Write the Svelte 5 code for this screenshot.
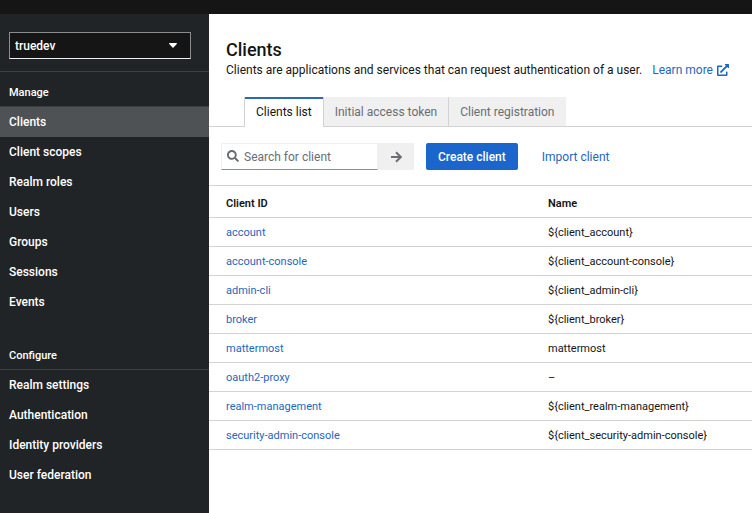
<script lang="ts">
	const manage = ['Clients', 'Client scopes', 'Realm roles', 'Users', 'Groups', 'Sessions', 'Events'];
	const configure = ['Realm settings', 'Authentication', 'Identity providers', 'User federation'];
	const tabs = ['Clients list', 'Initial access token', 'Client registration'];

	const clients = [
		{ id: 'account', name: '${client_account}' },
		{ id: 'account-console', name: '${client_account-console}' },
		{ id: 'admin-cli', name: '${client_admin-cli}' },
		{ id: 'broker', name: '${client_broker}' },
		{ id: 'mattermost', name: 'mattermost' },
		{ id: 'oauth2-proxy', name: '' },
		{ id: 'realm-management', name: '${client_realm-management}' },
		{ id: 'security-admin-console', name: '${client_security-admin-console}' }
	];

	let page = $state('Clients');
	let tab = $state('Clients list');
	let search = $state('');
	let query = $state('');

	const shown = $derived(clients.filter((c) => c.id.includes(query)));

	const submit = (e: Event) => {
		e.preventDefault();
		query = search;
	};
</script>

{#snippet section(title: string, items: string[])}
	<section>
		<h2>{title}</h2>
		<ul>
			{#each items as item}
				<li>
					<a href="#/{item}" class:current={page === item} onclick={() => (page = item)}>{item}</a>
				</li>
			{/each}
		</ul>
	</section>
{/snippet}

<div class="page">
	<header class="masthead"></header>
	<div class="body">
		<nav class="sidebar">
			<div class="realm">
				<select aria-label="Realm">
					<option>truedev</option>
				</select>
				<svg class="caret" viewBox="0 0 8 5" width="8" height="5">
					<path d="M.6 0h6.800c.5 0 .7.6.4.9L4.500 4.400c-.3.3-.7.3-1 0L.2.9C-.1.6.1 0 .6 0z" fill="#fff" />
				</svg>
			</div>
			{@render section('Manage', manage)}
			{@render section('Configure', configure)}
		</nav>

		<main>
			<div class="intro">
				<h1>Clients</h1>
				<p>
					<span>Clients are applications and services that can request authentication of a user.</span>
					<a href="#/docs" class="learn">
						Learn more
						<svg viewBox="0 0 512 512" width="12" height="12" fill="currentColor">
							<path
								d="M432 320h-32a16 16 0 0 0-16 16v112H64V128h144a16 16 0 0 0 16-16V80a16 16 0 0 0-16-16H48a48 48 0 0 0-48 48v352a48 48 0 0 0 48 48h352a48 48 0 0 0 48-48V336a16 16 0 0 0-16-16zM488 0H360c-21 0-32 26-17 41l36 36-244 243a24 24 0 0 0 0 34l23 23a24 24 0 0 0 34 0l243-244 36 36c15 15 41 4 41-17V24a24 24 0 0 0-24-24z"
							/>
						</svg>
					</a>
				</p>
			</div>

			<div class="tabs" role="tablist">
				{#each tabs as name}
					<button role="tab" aria-selected={tab === name} class:active={tab === name} onclick={() => (tab = name)}>
						{name}
					</button>
				{/each}
			</div>

			<div class="toolbar">
				<form class="search" onsubmit={submit}>
					<svg class="glass" viewBox="0 0 512 512" width="12" height="12" fill="#6a6e73">
						<path
							d="M505 442.700 405.300 343c-4.500-4.500-10.600-7-17-7H372c27.600-35.300 44-79.700 44-128C416 93.100 322.900 0 208 0S0 93.100 0 208s93.100 208 208 208c48.300 0 92.700-16.400 128-44v16.300c0 6.400 2.500 12.500 7 17l99.700 99.700c9.400 9.400 24.600 9.400 33.900 0l28.300-28.300c9.400-9.400 9.400-24.600.1-34zM208 336c-70.700 0-128-57.200-128-128 0-70.700 57.200-128 128-128 70.700 0 128 57.200 128 128 0 70.700-57.200 128-128 128z"
						/>
					</svg>
					<input type="text" aria-label="Search for client" placeholder="Search for client" bind:value={search} />
					<button aria-label="Search">
						<svg viewBox="0 0 12 12" width="12" height="12" fill="none" stroke="currentColor" stroke-width="2">
							<path d="M1 6h9.500M6 1.200 10.800 6 6 10.800" />
						</svg>
					</button>
				</form>
				<button class="create">Create client</button>
				<a href="#/import">Import client</a>
			</div>

			<table>
				<thead>
					<tr>
						<th>Client ID</th>
						<th>Name</th>
					</tr>
				</thead>
				<tbody>
					{#each shown as client}
						<tr>
							<td><a href="#/clients/{client.id}">{client.id}</a></td>
							<td>{client.name || '–'}</td>
						</tr>
					{/each}
				</tbody>
			</table>
		</main>
	</div>
</div>

<style>
	:global(body) {
		margin: 0;
		background: #fff;
	}

	.page {
		display: flex;
		flex-direction: column;
		min-height: 100vh;
		font-family: Roboto, sans-serif;
		font-size: 12px;
		line-height: 16px;
		color: #151515;
	}

	.masthead {
		height: 14px;
		background: #151515;
	}

	.body {
		display: flex;
		flex: 1;
	}

	a {
		color: #1f66bd;
		text-decoration: none;
	}

	button,
	input,
	select {
		font: inherit;
		border: none;
		border-radius: 0;
		box-sizing: border-box;
	}

	button {
		cursor: pointer;
	}

	.sidebar {
		flex: 0 0 209px;
		background: #212427;
		font-weight: 500;
	}

	.realm {
		position: relative;
		padding: 18px 18px 12px 9px;
		border-bottom: 1px solid #3c3f42;
	}

	select {
		display: block;
		appearance: none;
		width: 100%;
		height: 27px;
		padding: 0 5px;
		background: #151515;
		color: #fff;
		border: 1px solid #8a8d90;
		border-bottom-color: #f0f0f0;
	}

	.caret {
		position: absolute;
		right: 32px;
		top: 29px;
		pointer-events: none;
	}

	h2 {
		margin: 0;
		padding: 13px 9px 5px;
		border-bottom: 1px solid #3c3f42;
		color: #fff;
		font-size: 11px;
		font-weight: 500;
	}

	section + section {
		margin-top: 18px;
	}

	ul {
		margin: 0;
		padding: 0;
		list-style: none;
	}

	li a {
		display: block;
		padding: 7px 9px;
		color: #fff;
	}

	li a.current {
		background: #4f5255;
	}

	main {
		flex: 1;
		min-width: 0;
	}

	.intro {
		padding: 24px 17px 19px;
	}

	h1 {
		margin: 0;
		font-size: 18px;
		font-weight: 500;
		line-height: 24px;
	}

	p {
		display: flex;
		gap: 10px;
		margin: 0;
		white-space: nowrap;
	}

	.learn {
		display: flex;
		align-items: center;
		gap: 4px;
	}

	.tabs {
		display: flex;
		padding-left: 35px;
		border-bottom: 1px solid #d2d2d2;
	}

	.tabs button {
		height: 29px;
		padding: 0 11px;
		background: #f0f0f0;
		color: #6a6e73;
		border-right: 1px solid #d2d2d2;
	}

	.tabs button:last-child {
		border-right: none;
	}

	.tabs button.active {
		height: 30px;
		margin-bottom: -1px;
		background: #fff;
		color: #151515;
		border-left: 1px solid #d2d2d2;
		box-shadow: inset 0 2px #2b6cb0;
	}

	.toolbar {
		display: flex;
		align-items: center;
		padding: 16px 12px 15px;
	}

	.search {
		position: relative;
		display: flex;
		margin-right: 12px;
	}

	.glass {
		position: absolute;
		left: 6px;
		top: 7px;
	}

	.search input {
		width: 157px;
		height: 27px;
		padding: 0 6px 0 22px;
		background: #fff;
		border: 1px solid #f0f0f0;
		border-bottom-color: #8a8d90;
	}

	.search input::placeholder {
		color: #6a6e73;
	}

	.search button {
		display: grid;
		place-items: center;
		width: 36px;
		background: #f0f0f0;
		color: #6a6e73;
	}

	.create {
		height: 27px;
		margin-right: 24px;
		padding: 0 12px;
		border-radius: 2px;
		background: #1b66cc;
		color: #fff;
		font-weight: 500;
	}

	table {
		width: 100%;
		table-layout: fixed;
		border-collapse: collapse;
		border-top: 1px solid #d2d2d2;
		font-size: 11px;
	}

	tr {
		border-bottom: 1px solid #d2d2d2;
	}

	th,
	td {
		padding: 7px 17px 5px;
		text-align: left;
	}

	th {
		padding: 10px 17px 5px;
		font-weight: 600;
	}

	th:first-child {
		box-sizing: border-box;
		width: 59.3%;
	}
</style>
